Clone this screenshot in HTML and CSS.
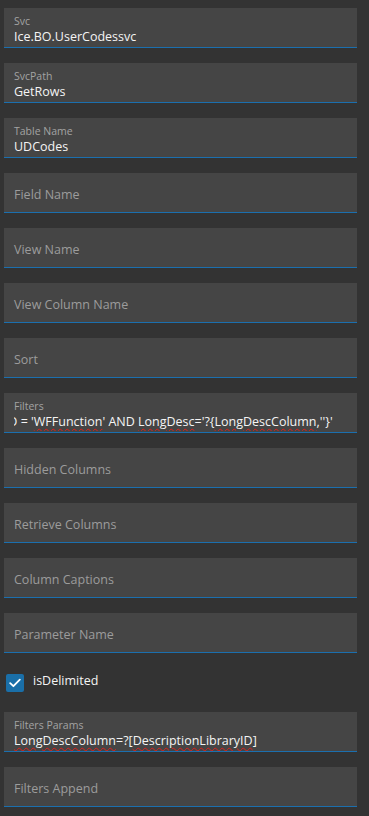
FILE: index.html
```html
<!DOCTYPE html>
<html lang="en">

<head>
    <meta charset="UTF-8">
    <meta name="viewport" content="width=device-width, initial-scale=1.0">
    <title>BAQ Settings</title>
    <link rel="stylesheet" href="styles.css">
</head>

<body>
    <div class="form">
        <div class="field">
            <div class="label">Svc</div>
            <div class="value">Ice.BO.UserCodessvc</div>
        </div>
        <div class="field">
            <div class="label">SvcPath</div>
            <div class="value">GetRows</div>
        </div>
        <div class="field">
            <div class="label">Table Name</div>
            <div class="value">UDCodes</div>
        </div>
        <div class="field empty">
            <div class="placeholder">Field Name</div>
        </div>
        <div class="field empty">
            <div class="placeholder">View Name</div>
        </div>
        <div class="field empty">
            <div class="placeholder">View Column Name</div>
        </div>
        <div class="field empty">
            <div class="placeholder">Sort</div>
        </div>
        <div class="field">
            <div class="label">Filters</div>
            <div class="value scrolled"><span class="shift">CodeTypeID = '<span class="typo">WFFunction</span>' AND <span class="typo">LongDesc</span>='?{<span class="typo">LongDescColumn</span>,''}'</span></div>
        </div>
        <div class="field empty">
            <div class="placeholder">Hidden Columns</div>
        </div>
        <div class="field empty">
            <div class="placeholder">Retrieve Columns</div>
        </div>
        <div class="field empty">
            <div class="placeholder">Column Captions</div>
        </div>
        <div class="field empty">
            <div class="placeholder">Parameter Name</div>
        </div>

        <label class="check-row">
            <span class="checkbox">
                <svg width="12" height="10" viewBox="0 0 12 10">
                    <path d="M1.2 5.2 L4.4 8.2 L10.8 1.6" fill="none" stroke="#fff" stroke-width="1.8" stroke-linecap="round" stroke-linejoin="round" />
                </svg>
            </span>
            <span class="check-text">isDelimited</span>
        </label>

        <div class="field">
            <div class="label">Filters Params</div>
            <div class="value"><span class="typo">LongDescColumn</span>=?[<span class="typo">DescriptionLibraryID</span>]</div>
        </div>
        <div class="field empty">
            <div class="placeholder">Filters Append</div>
        </div>
    </div>
</body>

</html>
```

FILE: styles.css
```css
body {
    margin: 0;
    background-color: #333333;
    font-family: "Open Sans", "Noto Sans", sans-serif;
    color: #f2f2f2;
}

.form {
    display: flex;
    flex-direction: column;
    gap: 15px;
    padding: 8px 12px 8px 4px;
}

/* text field */
.field {
    height: 40px;
    box-sizing: border-box;
    background-color: #454545;
    border-bottom: 1px solid #1b6fae;
    padding: 7px 10px 0;
    display: flex;
    flex-direction: column;
    overflow: hidden;
}

.field.empty {
    justify-content: center;
    padding-top: 5px;
}

.label {
    font-size: 10.5px;
    line-height: 13px;
    color: #a3a3a3;
}

.value {
    font-size: 12.5px;
    line-height: 18px;
    color: #f4f4f4;
    white-space: nowrap;
}

.placeholder {
    font-size: 12.5px;
    line-height: 18px;
    color: #9c9c9c;
}

.scrolled {
    overflow: hidden;
}

.shift {
    display: inline-block;
    margin-left: -67px;
}

.typo {
    text-decoration: underline wavy #e0201b;
    text-decoration-thickness: 1px;
    text-underline-offset: 2px;
}

/* checkbox */
.check-row {
    display: flex;
    align-items: center;
    gap: 9px;
    height: 29px;
    padding-left: 2px;
}

.checkbox {
    width: 18px;
    height: 18px;
    border-radius: 2px;
    background-color: #1a6fa8;
    display: flex;
    align-items: center;
    justify-content: center;
}

.check-text {
    font-size: 12.5px;
    line-height: 16px;
    margin-top: -3px;
    color: #f4f4f4;
}
```
